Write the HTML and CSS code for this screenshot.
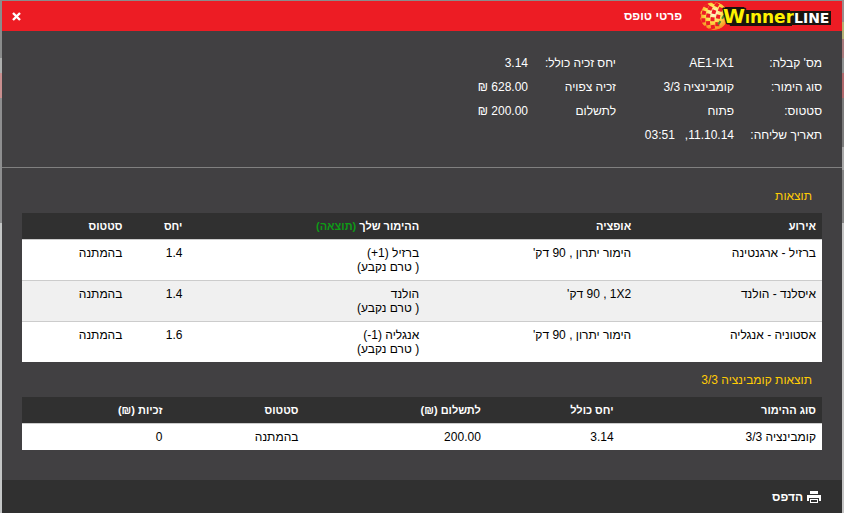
FILE: index.html
```html
<!DOCTYPE html>
<html lang="he" dir="rtl">
<head>
<meta charset="utf-8">
<title>פרטי טופס</title>
<link rel="stylesheet" href="styles.css">
</head>
<body>
<main class="dialog">
  <header class="bar">
    <svg class="logo" viewBox="0 0 132 30" role="img" aria-label="WinnerLine">
      <defs>
        <radialGradient id="ball" cx="50%" cy="40%" r="60%">
          <stop offset="0" stop-color="#fffde8"/>
          <stop offset="0.5" stop-color="#ffe24a"/>
          <stop offset="1" stop-color="#f58a1f"/>
        </radialGradient>
        <clipPath id="round"><circle cx="14" cy="15" r="14"/></clipPath>
      </defs>
      <g clip-path="url(#round)">
        <circle cx="14" cy="15" r="14" fill="url(#ball)"/>
        <g stroke="#ed1c24" stroke-width="4" stroke-dasharray="4 3.6" fill="none">
          <path d="M5 -1Q-5 12 2 29"/>
          <path d="M10 0Q-1 13 6 31" stroke-dashoffset="3.8"/>
          <path d="M15 -1Q4 13 10 31"/>
          <path d="M20 -1Q9 14 14 31" stroke-dashoffset="3.8"/>
          <path d="M25 0Q15 15 18 31"/>
        </g>
        <path d="M27 8Q24 16 17 25" fill="none" stroke="#4c8f35" stroke-width="2" stroke-dasharray="4 3"/>
      </g>
      <path d="M25 6H44V9H90V10H131V24H92V25H30Z" fill="#19140e"/>
      <g class="wordmark">
        <text class="win" x="23" y="22"><tspan class="cap">W</tspan><tspan class="small-cap">I</tspan><tspan>nner</tspan></text>
        <text class="line" x="94" y="22">LINE</text>
      </g>
    </svg>
    <h1 class="title">פרטי טופס</h1>
    <button class="close" type="button" aria-label="סגור">
      <svg viewBox="0 0 9 9" width="9" height="9"><path d="M1 1L8 8M8 1L1 8" stroke="#fff" stroke-width="2.4"/></svg>
    </button>
  </header>

  <dl class="summary">
    <dt>מס' קבלה:</dt><dd>AE1-IX1</dd><dt>יחס זכיה כולל:</dt><dd>3.14</dd>
    <dt>סוג הימור:</dt><dd>קומבינציה 3/3</dd><dt>זכיה צפויה</dt><dd>628.00 ₪</dd>
    <dt>סטטוס:</dt><dd>פתוח</dd><dt>לתשלום</dt><dd>200.00 ₪</dd>
    <dt>תאריך שליחה:</dt><dd>11.10.14, &nbsp;&nbsp;&rlm;03:51</dd>
  </dl>

  <section class="results">
    <h2>תוצאות</h2>
    <table class="events">
      <colgroup><col class="event"><col class="option"><col class="bet"><col class="odds"><col></colgroup>
      <thead>
        <tr><th>אירוע</th><th>אופציה</th><th>ההימור שלך <span class="outcome">(תוצאה)</span></th><th>יחס</th><th>סטטוס</th></tr>
      </thead>
      <tbody>
        <tr><td>ברזיל - ארגנטינה</td><td>הימור יתרון , 90 דק'</td><td>ברזיל (<bdi dir="ltr">+1</bdi>)<br>( טרם נקבע)</td><td>1.4</td><td>בהמתנה</td></tr>
        <tr><td>איסלנד - הולנד</td><td><bdi>1X2</bdi> , 90 דק'</td><td>הולנד<br>( טרם נקבע)</td><td>1.4</td><td>בהמתנה</td></tr>
        <tr><td>אסטוניה - אנגליה</td><td>הימור יתרון , 90 דק'</td><td>אנגליה (<bdi dir="ltr">-1</bdi>)<br>( טרם נקבע)</td><td>1.6</td><td>בהמתנה</td></tr>
      </tbody>
    </table>
    <h2>תוצאות קומבינציה 3/3</h2>
    <table class="combo">
      <colgroup><col class="kind"><col class="total"><col class="stake"><col class="state"><col></colgroup>
      <thead>
        <tr><th>סוג ההימור</th><th>יחס כולל</th><th>לתשלום (₪)</th><th>סטטוס</th><th>זכיות (₪)</th></tr>
      </thead>
      <tbody>
        <tr><td>קומבינציה 3/3</td><td>3.14</td><td>200.00</td><td>בהמתנה</td><td>0</td></tr>
      </tbody>
    </table>
  </section>

  <footer class="foot">
    <button class="print" type="button">
      <svg viewBox="0 0 14 12" width="14" height="12"><path fill="#fff" d="M3 0H11V3H3ZM0 4H14V10H12V7H2V10H0ZM3 8H11V12H3Z"/><path fill="#303030" d="M4 9H10V11H4Z"/></svg>
      הדפס
    </button>
  </footer>
</main>
</body>
</html>
```
FILE: styles.css
```css
* {
  box-sizing: border-box;
}

body {
  margin: 0;
  padding: 1px 2px 0;
  min-height: 100vh;
  display: flex;
  background:
    linear-gradient(#9a8c8c 22px, #b5b173 22px 39px, #a87a7c 39px 58px, #8f9090 58px 73px, #b0686c 73px 98px, #7b7b7b 98px 147px, #a8a8a8 147px 170px, #858585 170px 223px, #c4c4c4 223px) right / 2px 100% no-repeat,
    linear-gradient(#8a8c8c 58px, #adafae 58px 73px, #c98f8f 73px 98px, #8e8f90 98px 223px, #c4c6c6 223px);
  font: 12px/14px "Liberation Sans", Arial, sans-serif;
  color: #fff;
}

.dialog {
  flex: 1;
  display: flex;
  flex-direction: column;
  background: #414042;
}

.bar {
  display: flex;
  align-items: center;
  height: 30px;
  padding: 0 10px;
  background: #ed1c24;
}

.logo {
  width: 132px;
  height: 30px;
  direction: ltr;
}

.wordmark {
  font-family: "DejaVu Sans", sans-serif;
  font-weight: bold;
  stroke: #19140e;
  stroke-width: 3px;
  stroke-linejoin: round;
  paint-order: stroke;
}

.win {
  fill: #fff200;
  font-size: 17px;
}

.cap {
  font-size: 20px;
}

.small-cap {
  font-size: 13px;
}

.line {
  fill: #fff;
  font-size: 14px;
}

.title {
  margin: 0;
  padding-right: 18px;
  font-size: 12px;
}

button {
  border: 0;
  padding: 0;
  background: none;
  color: inherit;
  font: inherit;
  cursor: pointer;
}

.close {
  display: flex;
  margin-right: auto;
}

.summary {
  display: grid;
  grid-template-columns: 88px 118px 88px 1fr;
  line-height: 24px;
  margin: 0;
  padding: 20px;
  border-bottom: 1px solid #808080;
}

.summary dd {
  margin: 0;
}

.results {
  padding: 10px 20px 30px;
}

h2 {
  margin: 0;
  padding: 11px 10px 10px;
  color: #ffcb05;
  font-size: 12px;
  font-weight: normal;
}

table {
  width: 100%;
  table-layout: fixed;
  border-collapse: collapse;
  background: #fff;
  color: #000;
}

.event { width: 23.1%; }
.option { width: 26.5%; }
.bet { width: 29.6%; }
.odds { width: 7.5%; }

.kind { width: 25.3%; }
.total { width: 16.6%; }
.stake { width: 22.8%; }
.state { width: 17%; }

th,
td {
  padding: 6px;
  text-align: right;
  vertical-align: top;
}

th {
  background: #303030;
  color: #fff;
  font-size: 11px;
}

td {
  border-top: 1px solid #ccc;
}

tbody tr:nth-child(even) {
  background: #f0f0f0;
}

.outcome {
  color: #0e9a17;
}

.foot {
  flex: 1;
  padding: 10px 21px;
  background: #303030;
}

.print {
  display: flex;
  align-items: center;
  gap: 4px;
  font-weight: bold;
}
```
